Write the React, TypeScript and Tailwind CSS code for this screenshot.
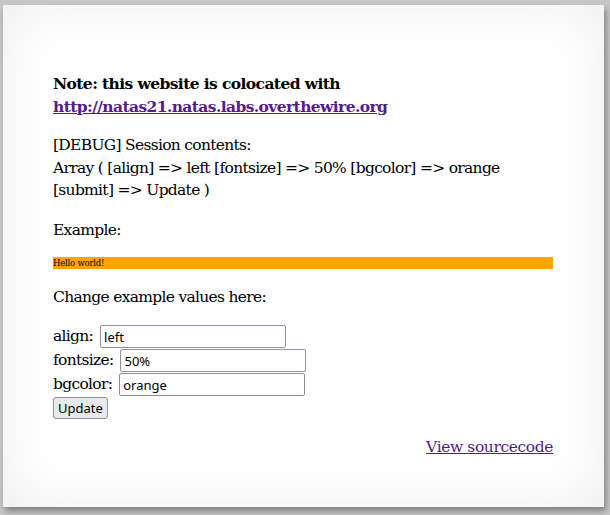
import React from "react";

export default function App() {
  const serif = { fontFamily: '"DejaVu Serif", serif' };
  return (
    <div className="w-[610px] h-[515px] bg-[#c6c6c6] pt-[5px] pl-[3px]">
      <div
        className="w-[601px] h-[502px] bg-white pl-[50px] pr-[51px] pt-[68px] text-black text-[15.5px] tracking-[-0.7px] leading-[22.5px] shadow-[inset_0_0_60px_rgba(0,0,0,0.07),2px_4px_6px_rgba(0,0,0,0.35)]"
        style={serif}
      >
        <p className="font-bold tracking-[-0.6px]">
          Note: this website is colocated with{" "}
          <a href="#" className="text-[#551a8b] underline">
            http://natas21.natas.labs.overthewire.org
          </a>
        </p>
        <p className="mt-[16px]">
          [DEBUG] Session contents:
          <br />
          Array ( [align] =&gt; left [fontsize] =&gt; 50% [bgcolor] =&gt; orange [submit] =&gt; Update )
        </p>
        <p className="mt-[17px]">Example:</p>
        <div className="mt-[16px] h-[12px] bg-[#ffa500] text-[8.5px] tracking-[-0.2px] leading-[12px] text-left">
          Hello world!
        </div>
        <p className="mt-[17px]">Change example values here:</p>
        <form className="mt-[16px]" onSubmit={(e) => e.preventDefault()}>
          <div className="flex items-center h-[24px] gap-[7px]">
            align:
            <Field value="left" />
          </div>
          <div className="flex items-center h-[24px] gap-[7px]">
            fontsize:
            <Field value="50%" />
          </div>
          <div className="flex items-center h-[24px] gap-[7px]">
            bgcolor:
            <Field value="orange" />
          </div>
          <button
            type="submit"
            className="h-[22px] px-[4px] bg-[#e9e9ed] border border-[#8f8f9d] rounded-[3px] text-[13px] tracking-normal leading-none"
            style={{ fontFamily: '"Noto Sans", sans-serif' }}
          >
            Update
          </button>
        </form>
        <div className="mt-[17px] text-right">
          <a href="#" className="text-[#551a8b] underline tracking-[-0.4px]">
            View sourcecode
          </a>
        </div>
      </div>
    </div>
  );
}

function Field({ value }: { value: string }) {
  return (
    <input
      defaultValue={value}
      className="w-[186px] h-[23px] border border-[#8f8f9d] rounded-[2px] px-[3px] text-[13px] tracking-normal bg-white"
      style={{ fontFamily: '"Noto Sans", sans-serif' }}
    />
  );
}
